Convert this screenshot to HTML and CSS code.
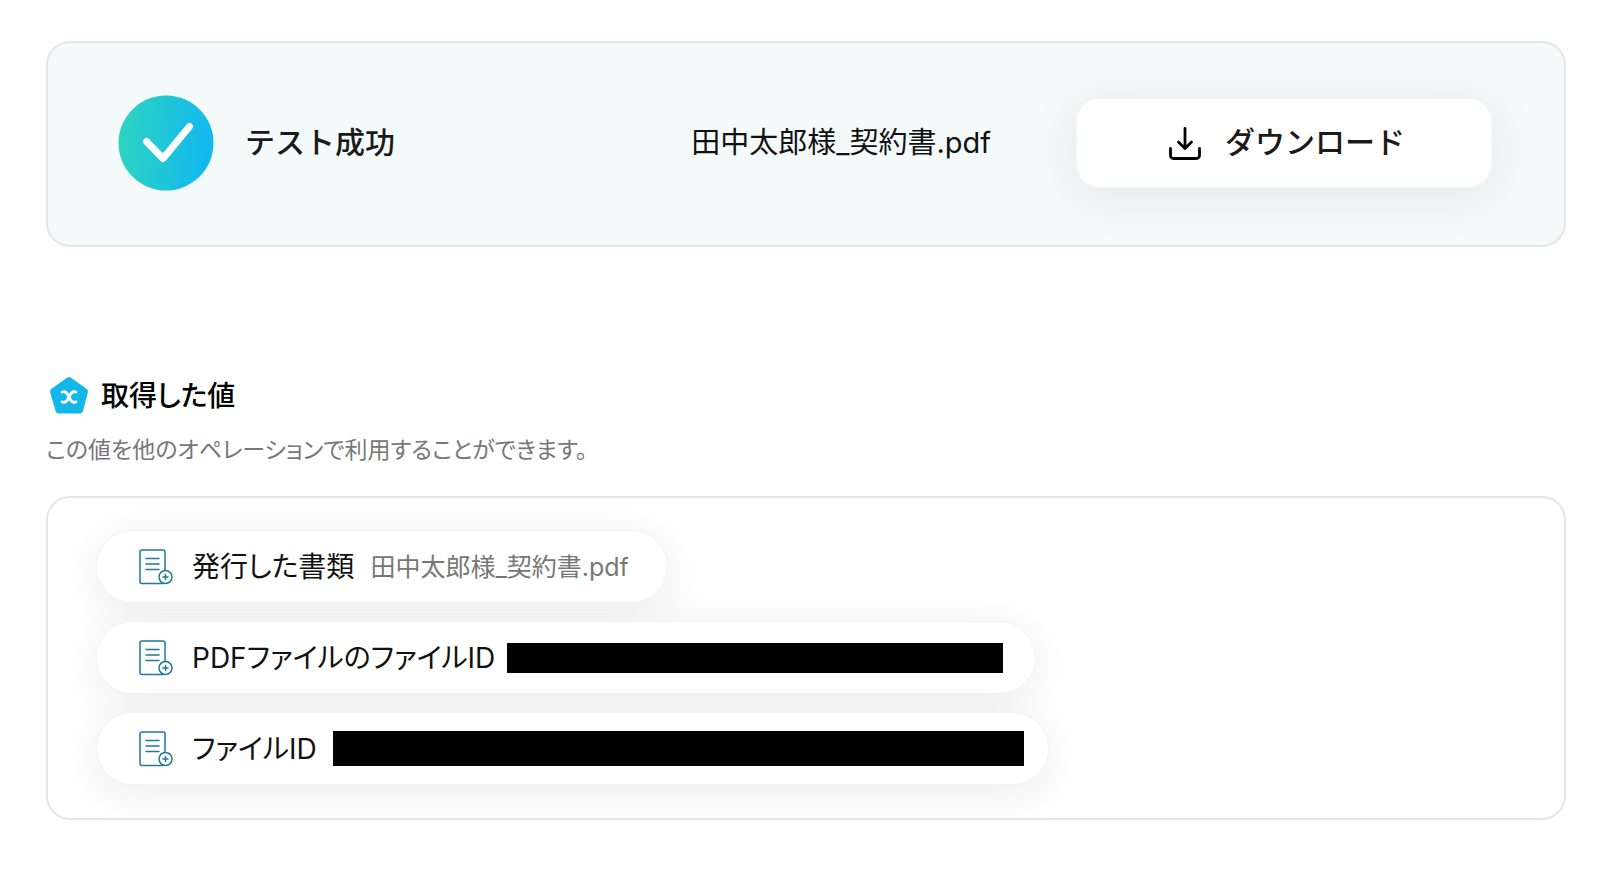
FILE: index.html
```html
<!DOCTYPE html>
<html lang="ja">
<head>
	<meta charset="utf-8">
	<title>テスト成功</title>
	<meta name="viewport" content="width=device-width, initial-scale=1">
	<link rel="stylesheet" href="styles.css">
</head>
<body>
	<svg class="defs" aria-hidden="true">
		<symbol id="doc" viewBox="0 0 34 36">
			<g fill="none" stroke="#217a96" stroke-width="1.5" stroke-linecap="round">
				<rect x="1" y="1" width="25" height="33.5" rx="2"/>
				<path d="M7 9.5h13M7 15h13M7 20.5h13"/>
				<circle cx="26.5" cy="28" r="6.5" fill="#fff"/>
				<path d="M26.5 25.5v5M24 28h5"/>
			</g>
		</symbol>
	</svg>

	<main>
		<section class="card result">
			<svg class="check" viewBox="0 0 96 96" aria-hidden="true">
				<defs>
					<linearGradient id="grad" x1="0" y1="0" x2="1" y2="0.1">
						<stop offset="0" stop-color="#2ed6c0"/>
						<stop offset="1" stop-color="#11b8ee"/>
					</linearGradient>
				</defs>
				<circle cx="48" cy="48" r="47.5" fill="url(#grad)"/>
				<path d="M28.5 46.5L45 63.5L71.5 31.5" fill="none" stroke="#fff" stroke-width="7" stroke-linecap="round" stroke-linejoin="round"/>
			</svg>
			<h1>テスト成功</h1>
			<span class="filename">田中太郎様_契約書.pdf</span>
			<button type="button" class="download">
				<svg viewBox="0 0 32 34" aria-hidden="true">
					<path d="M16 2.5v20M9.5 16l6.5 6.5l6.5-6.5M1.5 22.5v7a3 3 0 0 0 3 3h23a3 3 0 0 0 3-3v-7" fill="none" stroke="#000" stroke-width="2.8" stroke-linecap="round" stroke-linejoin="round"/>
				</svg>
				<span>ダウンロード</span>
			</button>
		</section>

		<section class="values">
			<h2>
				<svg viewBox="0 0 40 40" aria-hidden="true">
					<path d="M20 4L36 15.5L31 34.5H9.5L4 15.5Z" fill="#12b7ea" stroke="#12b7ea" stroke-width="6" stroke-linejoin="round"/>
					<path d="M13 16c4-1 5 1 7 5s3 6 7 5M27 16c-4-1-5 1-7 5s-3 6-7 5" fill="none" stroke="#fff" stroke-width="2.8" stroke-linecap="round"/>
				</svg>
				<span>取得した値</span>
			</h2>
			<p class="note">この値を他のオペレーションで利用することができます。</p>
			<ul class="card chips">
				<li class="chip">
					<svg aria-hidden="true"><use href="#doc"/></svg>
					<span class="label">発行した書類</span>
					<span class="value">田中太郎様_契約書.pdf</span>
				</li>
				<li class="chip masked">
					<svg aria-hidden="true"><use href="#doc"/></svg>
					<span class="label">PDFファイルのファイルID</span>
					<span class="mask mask-pdf"></span>
				</li>
				<li class="chip masked wide">
					<svg aria-hidden="true"><use href="#doc"/></svg>
					<span class="label">ファイルID</span>
					<span class="mask mask-file"></span>
				</li>
			</ul>
		</section>
	</main>
</body>
</html>
```
FILE: styles.css
```css
* {
	box-sizing: border-box;
}
body {
	margin: 0;
	background: #fff;
	color: #111;
	font-family: Inter, "Noto Sans CJK JP", sans-serif;
	font-size: 28px;
	font-feature-settings: "palt";
}
.defs {
	display: none;
}
main {
	padding: 41px 34px 48px 46px;
}
h1, h2, p, ul {
	margin: 0;
	padding: 0;
}
.card {
	border: 2px solid #e6e6e6;
	border-radius: 24px;
}
.result {
	display: flex;
	align-items: center;
	padding: 52px 71px 54px 70px;
	background: #f4fafa;
}
.check {
	flex: none;
	width: 96px;
	height: 96px;
}
h1 {
	margin-left: 31px;
	padding-bottom: 2px;
	color: #1a1a1a;
	font-size: 30px;
	font-weight: 500;
	font-feature-settings: normal;
	line-height: 40px;
}
.filename {
	margin-left: auto;
	margin-right: 84px;
	font-size: 29px;
	line-height: 40px;
}
.download {
	display: flex;
	align-items: center;
	justify-content: center;
	gap: 24px;
	width: 418px;
	height: 92px;
	padding: 0 0 0 6px;
	border: 2px solid #f3f3f3;
	border-radius: 24px;
	background: #fff;
	color: #1a1a1a;
	font-family: inherit;
	font-size: 30px;
	font-weight: 500;
	font-feature-settings: normal;
	line-height: 40px;
	box-shadow: 0 8px 48px rgba(0, 0, 0, 0.08);
	cursor: pointer;
}
.download svg {
	width: 32px;
	height: 34px;
}
.download span {
	padding-bottom: 2px;
}
.values {
	margin-top: 127px;
}
h2 {
	display: flex;
	align-items: center;
	gap: 12px;
	padding-left: 3px;
	color: #000;
	font-size: 28px;
	font-weight: 500;
	line-height: 44px;
}
h2 svg {
	width: 40px;
	height: 40px;
}
.note {
	margin-top: 16px;
	color: #777;
	font-size: 23px;
	line-height: 32px;
}
.chips {
	display: flex;
	flex-direction: column;
	align-items: flex-start;
	gap: 18px;
	margin-top: 30px;
	padding: 32px 48px 33px;
	list-style: none;
}
.chip {
	display: flex;
	align-items: center;
	height: 73px;
	padding: 0 38px 0 42px;
	border: 1px solid #f3f3f3;
	border-radius: 37px;
	background: #fff;
	line-height: 40px;
	box-shadow: 0 8px 48px rgba(0, 0, 0, 0.08);
}
.chip svg {
	flex: none;
	width: 34px;
	height: 36px;
	margin-right: 19px;
}
.value {
	margin-left: 16px;
	color: #777;
	font-size: 25px;
}
.masked {
	padding-right: 32px;
}
.wide {
	padding-right: 24px;
}
.mask {
	background: #000;
}
.mask-pdf {
	width: 496px;
	height: 30px;
	margin-left: 12px;
}
.mask-file {
	width: 691px;
	height: 35px;
	margin-left: 16px;
}
```
